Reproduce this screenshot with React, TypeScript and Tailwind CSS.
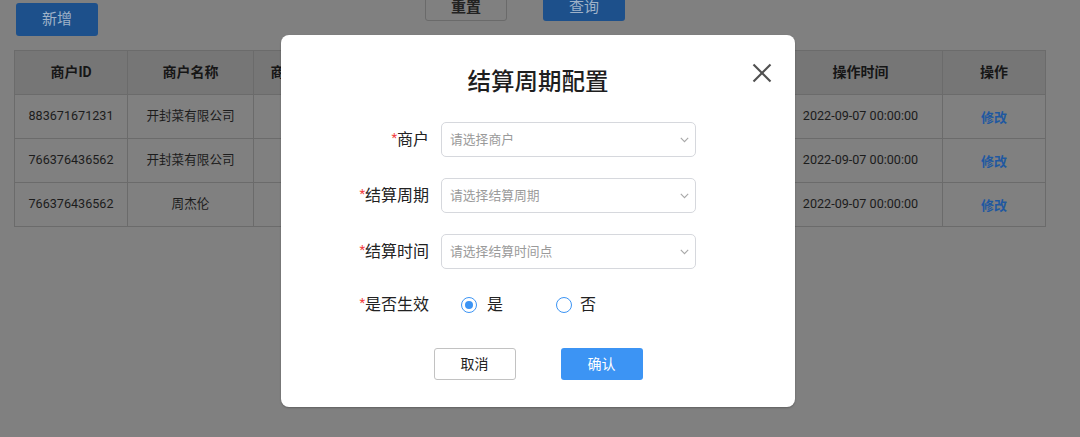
import React from "react";

const rows = [
  { id: "883671671231", name: "开封菜有限公司" },
  { id: "766376436562", name: "开封菜有限公司" },
  { id: "766376436562", name: "周杰伦" },
];

function Chevron() {
  return (
    <svg width="9" height="6" viewBox="0 0 9 6" className="shrink-0">
      <polyline points="0.8,0.8 4.5,4.6 8.2,0.8" fill="none" stroke="#a8a8a8" strokeWidth="1.1" />
    </svg>
  );
}

function SelectBox({ placeholder }: { placeholder: string }) {
  return (
    <div className="ml-[12px] flex h-[35px] w-[255px] items-center justify-between rounded-[5px] border border-[#d6d8dd] pl-[8px] pr-[6px]">
      <span className="text-[12.8px] text-[#9a9a9a]">{placeholder}</span>
      <Chevron />
    </div>
  );
}

function Label({ text }: { text: string }) {
  return (
    <div className="w-[148px] text-right text-[16px] leading-none text-[#222]">
      <span className="relative top-[-3px] text-[13px] text-[#f23c3c]">*</span>
      {text}
    </div>
  );
}

export default function App() {
  return (
    <div className="relative h-[437px] w-[1080px] overflow-hidden bg-[#808080] font-[Roboto,'Noto_Sans_CJK_SC',sans-serif]">
      {/* top buttons */}
      <div className="flex items-start">
        <div className="ml-[16px] mt-[3px] flex h-[33px] w-[82px] items-center justify-center rounded-[3px] bg-[#1d508b] text-[15px] text-[#9fb2c8]">
          新增
        </div>
        <div className="ml-[327px] mt-[-12px] flex h-[33px] w-[82px] items-center justify-center rounded-[3px] border border-[#6a6a6a] pt-[6px] text-[15px] font-bold text-[#222]">
          重置
        </div>
        <div className="ml-[36px] mt-[-12px] flex h-[33px] w-[82px] items-center justify-center rounded-[3px] bg-[#1d508b] pt-[6px] text-[15px] text-[#9fb2c8]">
          查询
        </div>
      </div>

      {/* table */}
      <table className="ml-[14px] mt-[14px] w-[1031px] table-fixed border-collapse text-center">
        <colgroup>
          <col className="w-[113px]" />
          <col className="w-[126px]" />
          <col className="w-[90px]" />
          <col className="w-[145px]" />
          <col className="w-[145px]" />
          <col className="w-[145px]" />
          <col className="w-[164px]" />
          <col className="w-[103px]" />
        </colgroup>
        <thead>
          <tr className="h-[44px] bg-[#767676] text-[14px] font-bold text-[#161616]">
            <th className="border border-[#6b6b6b]">商户ID</th>
            <th className="border border-[#6b6b6b]">商户名称</th>
            <th className="border border-[#6b6b6b]">商户类型</th>
            <th className="border border-[#6b6b6b]">结算周期</th>
            <th className="border border-[#6b6b6b]">结算时间</th>
            <th className="border border-[#6b6b6b]">是否生效</th>
            <th className="border border-[#6b6b6b]">操作时间</th>
            <th className="border border-[#6b6b6b]">操作</th>
          </tr>
        </thead>
        <tbody>
          {rows.map((r, i) => (
            <tr key={i} className="h-[44px] text-[12.6px] text-[#1c1c1c]">
              <td className="border border-[#6b6b6b]">{r.id}</td>
              <td className="border border-[#6b6b6b]">{r.name}</td>
              <td className="border border-[#6b6b6b]"></td>
              <td className="border border-[#6b6b6b]">月结</td>
              <td className="border border-[#6b6b6b]">每月1日</td>
              <td className="border border-[#6b6b6b]">是</td>
              <td className="border border-[#6b6b6b]">2022-09-07 00:00:00</td>
              <td className="border border-[#6b6b6b] pt-[3px] text-[13px] font-bold text-[#1f58a0]">修改</td>
            </tr>
          ))}
        </tbody>
      </table>

      {/* modal */}
      <div className="absolute left-[281px] top-[35px] flex h-[372px] w-[514px] flex-col rounded-[8px] bg-white pt-[31px] shadow-[0_1px_2px_rgba(0,0,0,0.25)]">
        <button className="absolute left-[471px] top-[28px]">
          <svg width="20" height="20" viewBox="0 0 20 20">
            <line x1="1.5" y1="1.5" x2="18.5" y2="18.5" stroke="#505050" strokeWidth="2.2" />
            <line x1="18.5" y1="1.5" x2="1.5" y2="18.5" stroke="#505050" strokeWidth="2.2" />
          </svg>
        </button>
        <div className="h-[32px] text-center text-[23.5px] font-medium leading-[32px] text-[#1e1e1e]">结算周期配置</div>

        <div className="mt-[24px] flex flex-col gap-[21px]">
          <div className="flex h-[35px] items-center">
            <Label text="商户" />
            <SelectBox placeholder="请选择商户" />
          </div>
          <div className="flex h-[35px] items-center">
            <Label text="结算周期" />
            <SelectBox placeholder="请选择结算周期" />
          </div>
          <div className="flex h-[35px] items-center">
            <Label text="结算时间" />
            <SelectBox placeholder="请选择结算时间点" />
          </div>
        </div>

        <div className="mt-[19px] flex h-[34px] items-center">
          <Label text="是否生效" />
          <div className="ml-[32px] flex items-center">
            <span className="flex h-[16px] w-[16px] items-center justify-center rounded-full border-[1.5px] border-[#3c94f4]">
              <span className="h-[8px] w-[8px] rounded-full bg-[#3c94f4]" />
            </span>
            <span className="ml-[10px] text-[16px] text-[#222]">是</span>
          </div>
          <div className="ml-[53px] flex items-center">
            <span className="h-[16px] w-[16px] rounded-full border-[1.5px] border-[#3c94f4]" />
            <span className="ml-[8px] text-[16px] text-[#222]">否</span>
          </div>
        </div>

        <div className="mt-[26px] flex justify-center gap-[45px]">
          <div className="flex h-[32px] w-[82px] items-center justify-center rounded-[3px] border border-[#c2c2c2] text-[14px] text-[#222]">
            取消
          </div>
          <div className="flex h-[32px] w-[82px] items-center justify-center rounded-[3px] bg-[#3c94f4] text-[14px] text-white">
            确认
          </div>
        </div>
      </div>
    </div>
  );
}
